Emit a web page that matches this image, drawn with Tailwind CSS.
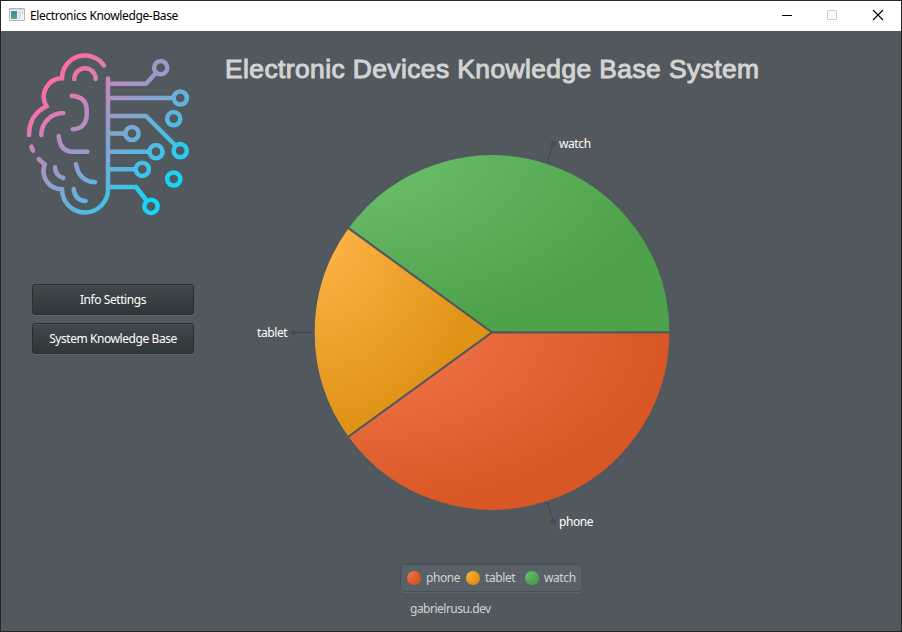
<!DOCTYPE html>
<html lang="en">
<head>
<meta charset="utf-8">
<title>Electronics Knowledge-Base</title>
<script src="https://cdn.jsdelivr.net/npm/@tailwindcss/browser@4"></script>
</head>
<body class="overflow-hidden">
<div class="flex h-[632px] w-[902px] flex-col border border-[#252628] bg-[#51585e] font-['Noto_Sans','Open_Sans',sans-serif] text-[12px] leading-4 text-white">
  <header class="flex h-[30px] shrink-0 items-center bg-white pl-2 text-black">
    <svg class="-mt-0.5 mr-[5px] h-[14px] w-4" viewBox="0 0 16 14">
      <defs><linearGradient id="app" x2="0" y2="1"><stop stop-color="#4d7fae"/><stop offset="1" stop-color="#55a878"/></linearGradient></defs>
      <path fill="#f3f3f5" stroke="#b4b6b9" d="M.5.5h15v12H.5z"/>
      <path fill="#d0d1d4" d="M1 1h14v1H1z"/>
      <path fill="url(#app)" d="M2 3h6v8H2z"/>
      <path fill="#dadde3" d="M9 3h3v8H9z"/><path fill="#a6cdb8" d="M13 3h1v3h-1z"/>
    </svg>
    <span class="whitespace-nowrap tracking-[-0.36px]">Electronics Knowledge-Base</span>
    <svg class="ml-auto h-[30px] w-[138px]" viewBox="0 0 138 30" fill="none">
      <path stroke="#000" d="M19 14.5h10"/>
      <path stroke="#ccc" d="M64.500 9.500h9v9h-9z"/>
      <path stroke="#000" stroke-width="1.1" d="m110 9 10 10m0-10-10 10"/>
    </svg>
  </header>
  <div class="flex min-h-0 flex-1">
    <aside class="flex w-[212px] shrink-0 flex-col pl-[19px] pt-[14px]">
      <svg class="h-[175px] w-[175px]" viewBox="20 45 175 175" fill="none" stroke="url(#brain)" stroke-width="4.500" stroke-linecap="round">
        <defs><linearGradient id="brain" gradientUnits="userSpaceOnUse" x1="54" y1="80" x2="164" y2="190"><stop stop-color="#ff6ca8"/><stop offset="1" stop-color="#15d6f6"/></linearGradient></defs>
        <path d="M104 65.500A23 23 0 0 0 62 78.200A18.500 18.500 0 0 0 46.500 106.300Q29 115 29 135M31.300 146.700l1.700 4M38.700 159.200l6 5.200A18.400 18.400 0 0 0 62 189.300A23 23 0 0 0 108 189.500V78.500"/>
        <path d="M74.300 79A10.700 10.700 0 0 1 95.700 79M63.300 113A22 22 0 0 0 41.300 135M71.700 95.700Q86.700 97 86.700 110V115Q86 128.500 72.700 129.300M58.700 136Q60 151.700 73 151.700H87.300M55 167.300Q55.500 175.500 63.300 178M76 164.300Q79 181 95 182.200M73.700 189Q75 200.500 85.700 201"/>
        <path stroke-linecap="butt" stroke-linejoin="round" d="M108 83.700H146L156 73M108 98.100H173.500M108 133.500H125M108 116H146L175.500 145.500M108 151.700H149M108 169.300H135.500M108 187H136L146.500 200.500"/>
        <circle cx="160.700" cy="67.700" r="6.600"/><circle cx="180.300" cy="98" r="6.600"/><circle cx="173.700" cy="118.700" r="6.600"/><circle cx="132" cy="133.500" r="6.600"/><circle cx="180.200" cy="150.700" r="6.600"/><circle cx="156" cy="151.700" r="6.600"/><circle cx="142.300" cy="169.300" r="6.600"/><circle cx="173.700" cy="179" r="6.600"/><circle cx="151" cy="206.300" r="6.600"/>
      </svg>
      <nav class="ml-3 mt-16 flex w-[162px] flex-col gap-2">
        <button class="h-[31px] rounded-[3px] border border-[#292e31] bg-linear-to-b from-[#40484d] to-[#30373a] pt-px tracking-[-0.43px] shadow-[0_1px_0_#5f666c,inset_0_1px_0_#4a5258]">Info Settings</button>
        <button class="h-[31px] rounded-[3px] border border-[#292e31] bg-linear-to-b from-[#40484d] to-[#30373a] pt-px tracking-[-0.43px] shadow-[0_1px_0_#5f666c,inset_0_1px_0_#4a5258]">System Knowledge Base</button>
      </nav>
    </aside>
    <main class="flex flex-1 flex-col items-start">
      <h1 class="ml-3 mt-[22px] origin-left scale-x-[1.055] whitespace-nowrap font-['Liberation_Sans',sans-serif] text-[25px] font-normal leading-8 tracking-[0.4px] text-[#d3d3d3] [-webkit-text-stroke:1px_#d3d3d3]">Electronic Devices Knowledge Base System</h1>
      <svg class="ml-[27px] mt-[35px] h-[420px] w-[450px]" viewBox="240 120 450 420">
        <defs>
          <radialGradient id="green" cx="0" cy="0" r="1"><stop stop-color="#6ec26f"/><stop offset="1" stop-color="#4ea24b"/></radialGradient>
          <radialGradient id="amber" cx="0" cy="0" r="1"><stop stop-color="#ffb74c"/><stop offset="1" stop-color="#df9214"/></radialGradient>
          <radialGradient id="red" cx="0" cy="0" r="1"><stop stop-color="#f47a50"/><stop offset="1" stop-color="#d95625"/></radialGradient>
        </defs>
        <g stroke="#51585e" stroke-width="2" transform="translate(0 .2)">
          <path fill="url(#green)" d="M492 332.300H670.300A178.300 178.300 0 0 0 347.750 227.500Z"/>
          <path fill="url(#amber)" d="M492 332.300L347.750 227.500A178.300 178.300 0 0 0 347.750 437.100Z"/>
          <path fill="url(#red)" d="M492 332.300L347.750 437.100A178.300 178.300 0 0 0 670.300 332.300Z"/>
        </g>
        <g fill="#464c51" stroke="#41474c">
          <path d="M547.200 162.500L553.300 143.700M313.500 332.500H293.500M547.200 502L553.300 521.500"/>
          <circle cx="553.300" cy="143.700" r="1.900"/><circle cx="293.500" cy="332.500" r="1.900"/><circle cx="553.300" cy="521.500" r="1.900"/>
        </g>
        <g fill="#fff" font-size="12" letter-spacing="-.4">
          <text x="559" y="148">watch</text><text x="257" y="337">tablet</text><text x="559" y="526">phone</text>
        </g>
      </svg>
      <div class="ml-[187px] mt-[23px] flex h-[29px] w-[183px] items-center rounded-[4px] border border-[#485057] bg-[#596168] pl-[5px] tracking-[-0.4px] text-[#d3d3d3] shadow-[0_1px_0_#60676d,inset_0_1px_2px_#4d555b]">
        <svg class="ml-px mr-[5px] size-[14px]" viewBox="0 0 14 14"><circle cx="7" cy="7" r="7" fill="url(#red)"/></svg><span class="w-10">phone</span>
        <svg class="mr-[5px] size-[14px]" viewBox="0 0 14 14"><circle cx="7" cy="7" r="7" fill="url(#amber)"/></svg><span class="w-10">tablet</span>
        <svg class="mr-[5px] size-[14px]" viewBox="0 0 14 14"><circle cx="7" cy="7" r="7" fill="url(#green)"/></svg><span>watch</span>
      </div>
      <p class="ml-[197px] mt-[9px] tracking-[-0.5px] text-[#d3d3d3]">gabrielrusu.dev</p>
    </main>
  </div>
</div>
</body>
</html>
